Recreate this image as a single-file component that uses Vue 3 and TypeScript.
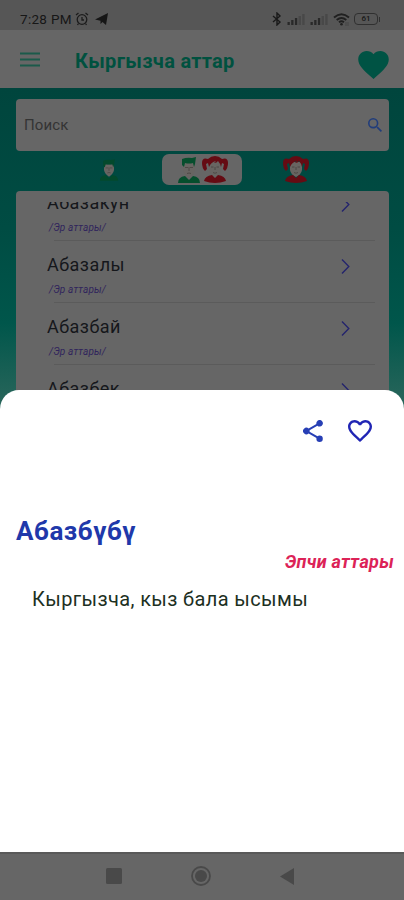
<script setup lang="ts">
interface NameRow {
  name: string
  kind: string
}

const rows: NameRow[] = [
  { name: 'Абазакун', kind: '/Эр аттары/' },
  { name: 'Абазалы', kind: '/Эр аттары/' },
  { name: 'Абазбай', kind: '/Эр аттары/' },
  { name: 'Абазбек', kind: '/Эр аттары/' },
]

const bars: number[] = [3, 5, 7, 9, 11]
</script>

<template>
  <div class="screen">
    <svg class="defs" width="0" height="0" aria-hidden="true">
      <symbol id="boy" viewBox="0 0 24 26">
        <path class="skin" d="M6 6h12v7q-1 5-6 8-5-3-6-8z" />
        <path d="M5 2q5-2 10-1l4-1-1 7-1 3-1-4q-4 1-8 0L7 10 5 8z" />
        <path d="M1 26q0-6 7-7l4 4 4-4q7 1 7 7z" />
        <path class="line" d="M8 10.500h3M13 10.500h3M12 10v4M10 16.500q2-1 4 0" />
      </symbol>
      <symbol id="girl" viewBox="0 0 26 27">
        <path class="skin" d="M7 6h12v8q-1 5-6 7-5-2-6-7z" />
        <path d="M6 3q3-3 7-3t7 3q6-2 6 4 0 5-3 8l-2-2 1-5-2-1-1 4q-1-4-3-6-1 2-4 2l2-2q-5 1-7 6L6 7 4 8l1 5-2 2Q0 12 0 7q0-6 6-4z" />
        <path d="M2 25q1-5 8-6l3 3 3-3q7 1 8 6-11 4-22 0z" />
        <path class="line" d="M9 11h2.500M14.500 11H17M13 11v3M11 16.500q2 1.500 4 0" />
      </symbol>
    </svg>

    <div class="status">
      <span class="clock">7:28 PM</span>
      <svg class="alarm" viewBox="0 0 14 14" width="14" height="14">
        <circle cx="7" cy="7.500" r="4.800" /><path d="M7 5v3h2M1 3l2.500-2M13 3l-2.500-2M3.500 11.500l-1 1.500M10.500 11.500l1 1.500" />
      </svg>
      <svg class="plane" viewBox="0 0 13 12" width="13" height="12"><path d="M0 6.500 13 0 11 12 7.500 9 5.500 11V7.800z" /></svg>
      <div class="indicators">
        <svg class="bluetooth" viewBox="0 0 10 14" width="10" height="14"><path d="m1 4 7 6-3 3V1l3 3-7 6" /></svg>
        <svg v-for="n in 2" :key="n" class="signal" viewBox="0 0 19 12" width="19" height="12">
          <rect v-for="(h, i) in bars" :key="h" :x="i * 3.700 + 0.500" :y="12 - h" width="2.300" :height="h" :class="{ faint: i > 2 }" />
        </svg>
        <svg class="wifi" viewBox="0 0 17 13" width="17" height="13">
          <path d="M1 4.500q7.500-6.500 15 0M3.700 7q4.800-4 9.600 0M6 9.300q2.500-2 5 0" /><circle cx="8.500" cy="11.200" r="1.300" /><path class="thin" d="M13 9v4M15 9v4" />
        </svg>
        <span class="battery">61</span>
      </div>
    </div>

    <header class="bar">
      <svg class="menu" viewBox="0 0 20 15" width="20" height="15"><path d="M0 1.500h20M0 7.500h20M0 13.500h20" /></svg>
      <h1>Кыргызча аттар</h1>
      <svg class="favorite" viewBox="2 3 20 18.350" width="31" height="28">
        <path d="m12 21.350-1.450-1.320C5.400 15.360 2 12.280 2 8.500 2 5.420 4.420 3 7.500 3c1.740 0 3.410.810 4.500 2.090C13.090 3.810 14.760 3 16.500 3 19.580 3 22 5.420 22 8.500c0 3.780-3.400 6.860-8.550 11.540z" />
      </svg>
    </header>

    <main class="content">
      <div class="search">
        <span>Поиск</span>
        <svg viewBox="3 3 17.500 17.500" width="14" height="14"><path d="M15.500 14h-.790l-.280-.270A6.470 6.470 0 0 0 16 9.500 6.500 6.500 0 1 0 9.500 16c1.610 0 3.090-.590 4.230-1.570l.270.280v.790l5 4.990L20.490 19zm-6 0a4.500 4.500 0 1 1 0-9 4.500 4.500 0 0 1 0 9z" /></svg>
      </div>
      <div class="tabs">
        <div class="tab male"><svg class="boy" width="20" height="24"><use href="#boy" /></svg></div>
        <div class="tab both">
          <svg class="boy" width="24" height="26"><use href="#boy" /></svg>
          <svg class="girl" width="26" height="27"><use href="#girl" /></svg>
        </div>
        <div class="tab female"><svg class="girl" width="26" height="27"><use href="#girl" /></svg></div>
      </div>
      <div class="card">
        <div class="list">
          <div v-for="row in rows" :key="row.name" class="row">
            <div class="labels">
              <span class="name">{{ row.name }}</span>
              <span class="kind">{{ row.kind }}</span>
            </div>
            <svg class="chevron" viewBox="0 0 9 15" width="9" height="15"><path d="m1 .500 6.800 7L1 14.500" /></svg>
          </div>
        </div>
      </div>
    </main>

    <section class="sheet">
      <div class="actions">
        <svg class="share" viewBox="3 2 18 20" width="20" height="22"><path d="M18 16.080c-.760 0-1.440.300-1.960.770L8.910 12.700a3.300 3.300 0 0 0 0-1.400l7.050-4.110A3 3 0 1 0 15 5c0 .240.040.470.090.700L8.040 9.810a3 3 0 1 0 0 4.380l7.120 4.160c-.050.210-.080.430-.080.650A2.920 2.920 0 1 0 18 16.080z" /></svg>
        <svg class="like" viewBox="2 3 20 18.350" width="24" height="22"><path d="M16.500 3c-1.740 0-3.410.810-4.500 2.090C10.910 3.810 9.240 3 7.500 3 4.420 3 2 5.420 2 8.500c0 3.780 3.400 6.860 8.550 11.540L12 21.350l1.450-1.320C18.600 15.360 22 12.280 22 8.500 22 5.420 19.580 3 16.500 3zm-4.400 15.550-.100.100-.100-.100C7.140 14.240 4 11.390 4 8.500 4 6.500 5.500 5 7.500 5c1.540 0 3.040.990 3.570 2.360h1.870C13.460 5.990 14.960 5 16.500 5c2 0 3.500 1.500 3.500 3.500 0 2.890-3.140 5.740-7.900 10.050z" /></svg>
      </div>
      <h2>Абазбүбү</h2>
      <p class="group">Эпчи аттары</p>
      <p class="meaning">Кыргызча, кыз бала ысымы</p>
    </section>

    <nav class="system">
      <svg viewBox="0 0 16 16" width="16" height="16"><rect width="16" height="16" rx="1.500" /></svg>
      <svg viewBox="0 0 20 20" width="20" height="20"><circle class="ring" cx="10" cy="10" r="9" /><circle cx="10" cy="10" r="6" /></svg>
      <svg viewBox="0 0 14 17" width="14" height="17"><path d="M0 8.500 14 0v17z" /></svg>
    </nav>
  </div>
</template>

<style>
body {
  margin: 0;
}
</style>

<style scoped>
.screen {
  position: relative;
  display: flex;
  flex-direction: column;
  width: 404px;
  height: 900px;
  overflow: hidden;
  background: #27655a;
  font-family: Roboto, "Noto Sans", sans-serif;
}
.screen svg { flex: none; display: block; }
.screen .defs { position: absolute; }
h1, h2, p { margin: 0; white-space: nowrap; }

.status {
  box-sizing: border-box;
  display: flex;
  align-items: center;
  height: 30px;
  padding: 8px 26px 0 20px;
  background: #565656;
  color: #171717;
}
.clock { width: 52px; font-size: 13.500px; letter-spacing: 0.300px; white-space: nowrap; }
.alarm { margin-left: 3px; fill: none; stroke: #1c1c1c; stroke-width: 1.300; }
.plane { margin-left: 6px; fill: #161616; }
.indicators { display: flex; align-items: center; margin-left: auto; }
.bluetooth { margin-right: 5px; fill: none; stroke: #191919; stroke-width: 1.400; }
.signal { margin-right: 4px; fill: #292929; }
.signal .faint { fill: #484848; }
.wifi { margin-right: 4px; fill: #202020; }
.wifi path { fill: none; stroke: #202020; stroke-width: 1.900; }
.wifi .thin { stroke: #444; stroke-width: 1; }
.battery {
  position: relative;
  box-sizing: border-box;
  width: 24px;
  height: 12px;
  border: 1.500px solid #303030;
  border-radius: 4px;
  font-size: 8px;
  font-weight: 500;
  line-height: 10px;
  text-align: center;
}
.battery::after {
  position: absolute;
  top: 2.500px;
  right: -3px;
  width: 1.500px;
  height: 5px;
  background: #303030;
  content: "";
}

.bar {
  box-sizing: border-box;
  display: flex;
  align-items: center;
  height: 58px;
  padding: 2px 15px 0 20px;
  background: #666;
}
.menu { margin-bottom: 2px; fill: none; stroke: #1b5a4a; stroke-width: 2; }
h1 { margin: 1px 0 0 35px; color: #00513f; font-size: 20px; font-weight: 700; letter-spacing: 0.300px; }
.favorite { margin: 9px 0 0 auto; fill: #005344; }

.content {
  display: flex;
  flex-direction: column;
  height: 302px;
  padding: 11px 15px 0 16px;
  background: linear-gradient(#00453d 0%, #004c43 45%, #00564b 75%, #27655a 100%);
  overflow: hidden;
}
.search {
  box-sizing: border-box;
  display: flex;
  align-items: center;
  justify-content: space-between;
  height: 52px;
  padding: 0 7px 0 8px;
  border-radius: 4px;
  background: #666;
  color: #343434;
  font-size: 15px;
  letter-spacing: 0.100px;
}
.search svg { fill: #213d7b; }
.tabs {
  display: flex;
  align-items: center;
  height: 31px;
  margin-top: 3px;
}
.tab { display: flex; align-items: center; justify-content: center; height: 31px; }
.male { width: 40px; margin-left: 73px; }
.both { gap: 1px; width: 80px; margin-left: 33px; border-radius: 7px; background: #666; }
.both .girl { margin-right: -1px; }
.female { width: 40px; margin-left: 34px; }
.boy { fill: #064e2d; }
.male .boy { fill: #03492c; }
.girl { fill: #650b13; }
.skin { fill: #686562; }
.line { fill: none; stroke: #48423f; stroke-width: 0.800; }
.card {
  box-sizing: border-box;
  height: 210px;
  margin-top: 6px;
  padding: 11px 14px 0 31px;
  border-radius: 4px 4px 0 0;
  background: #666;
}
.list { display: flex; flex-direction: column; height: 198px; overflow: hidden; }
.row {
  position: relative;
  box-sizing: border-box;
  flex: none;
  display: flex;
  justify-content: space-between;
  height: 62px;
  padding: 13px 25px 0 0;
}
.row:first-child { margin-top: -23px; }
.row::after {
  position: absolute;
  right: 0;
  bottom: 0;
  left: 7px;
  height: 1px;
  background: #5b5b5b;
  content: "";
}
.labels { display: flex; flex-direction: column; }
.name { color: #15171b; font-size: 18px; line-height: 22px; letter-spacing: 0.450px; }
.kind { margin: 8px 0 0 2px; color: #30245c; font-size: 10px; font-style: italic; line-height: 12px; letter-spacing: 0.150px; }
.chevron { margin-top: 5px; fill: none; stroke: #24246d; stroke-width: 1.400; }

.sheet {
  position: absolute;
  top: 390px;
  right: 0;
  left: 0;
  box-sizing: border-box;
  height: 462px;
  padding: 30px 10px 0 16px;
  border-radius: 19px 19px 0 0;
  background: #fff;
}
.actions { display: flex; align-items: center; justify-content: flex-end; gap: 25px; height: 22px; padding-right: 22px; }
.share { fill: #273fb5; }
.like { fill: #2025b4; }
h2 { margin-top: 72px; color: #2038aa; font-size: 26px; font-weight: 700; line-height: 34px; letter-spacing: 0.550px; }
.group { margin-top: 3px; color: #dc2357; font-size: 18px; font-style: italic; font-weight: 700; line-height: 22px; letter-spacing: 0.300px; text-align: right; }
.meaning { margin: 13px 0 0 16px; color: #1d301f; font-size: 20px; line-height: 26px; letter-spacing: 0.380px; }

.system {
  box-sizing: border-box;
  display: flex;
  align-items: center;
  gap: 69px;
  height: 48px;
  margin-top: auto;
  padding: 0 0 2px 106px;
  border-top: 2px solid #595959;
  background: #666;
}
.system svg { fill: #494949; }
.system .ring { fill: none; stroke: #494949; stroke-width: 1.800; }
</style>
